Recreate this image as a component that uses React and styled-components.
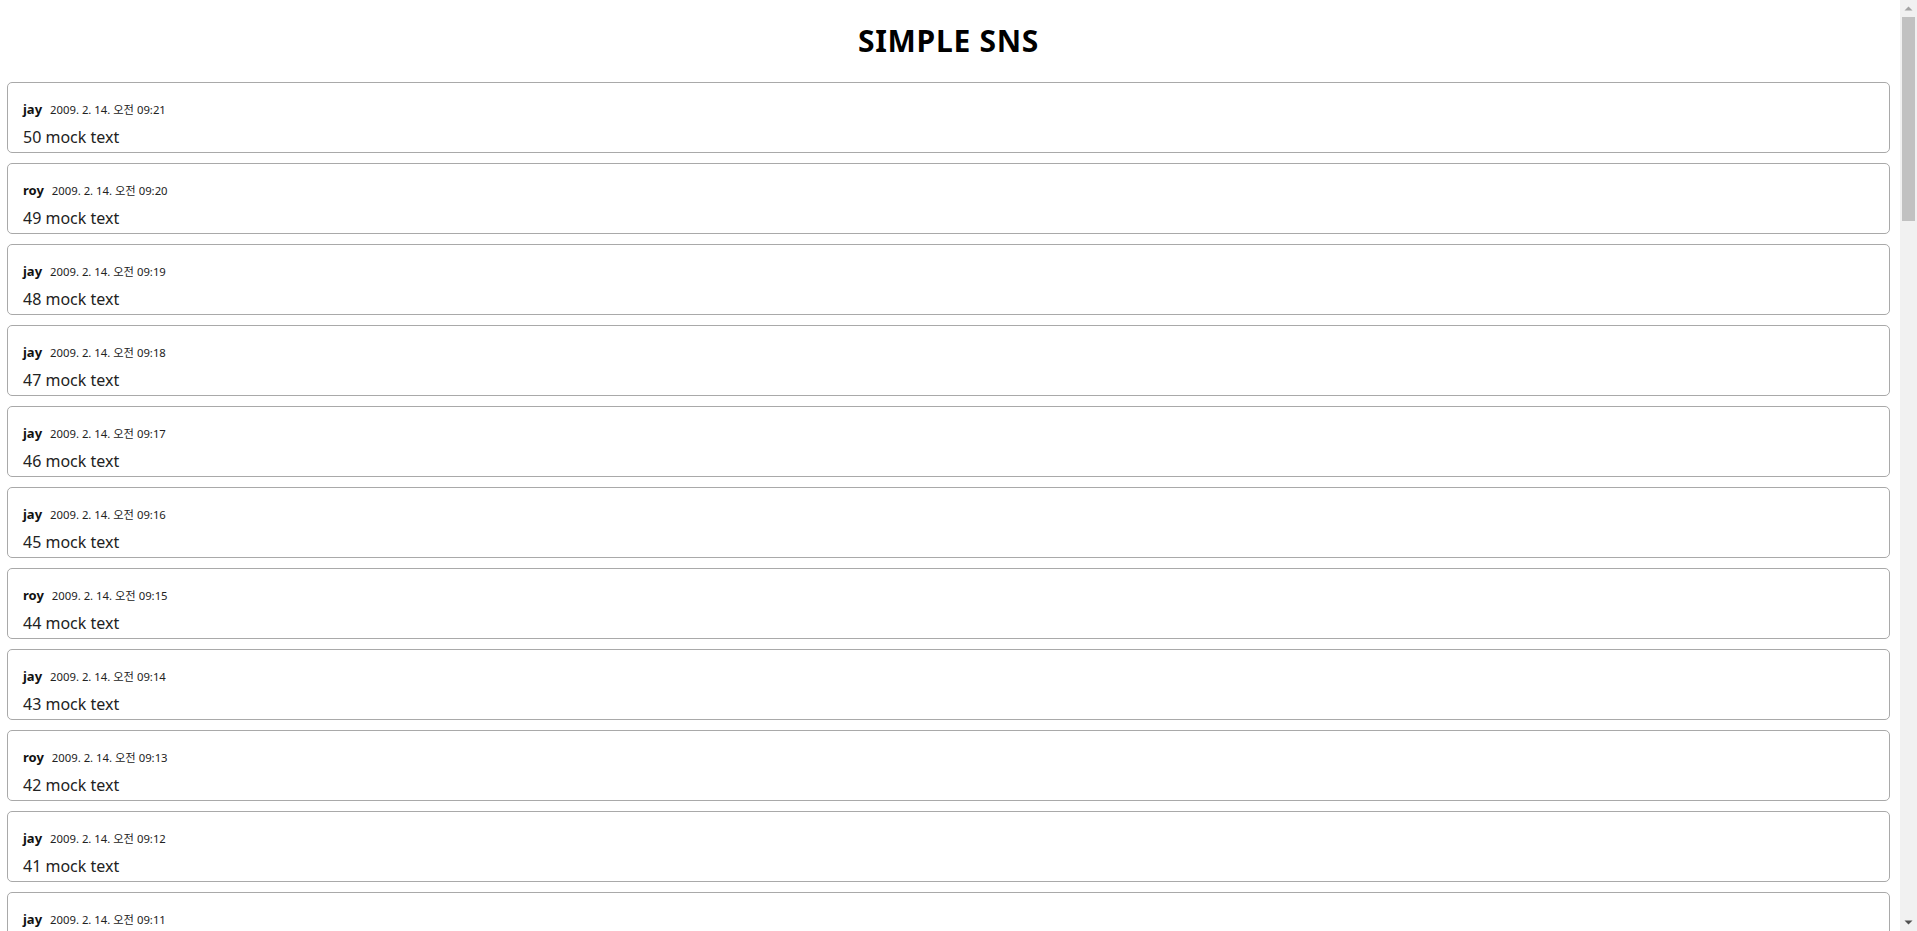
import React from 'react';
import styled, { createGlobalStyle } from 'styled-components';

const GlobalStyle = createGlobalStyle`
  html, body {
    margin: 0;
    padding: 0;
    background: #ffffff;
  }
  body {
    font-family: 'Noto Sans', 'Noto Sans CJK KR', sans-serif;
    color: #111;
  }
`;

const Shell = styled.div`
  display: flex;
  height: 100vh;
  overflow: hidden;
`;

const Page = styled.div`
  flex: 1;
  min-width: 0;
  display: flex;
  flex-direction: column;
  padding: 21px 10px 20px 7px;
`;

const Title = styled.h1`
  margin: 0 0 21px;
  font-size: 30px;
  line-height: 40px;
  font-weight: 700;
  letter-spacing: 0.7px;
  text-align: center;
  color: #000;
`;

const List = styled.div`
  display: flex;
  flex-direction: column;
  gap: 10px;
`;

const Card = styled.div`
  display: flex;
  flex-direction: column;
  gap: 7px;
  flex-shrink: 0;
  height: 71px;
  box-sizing: border-box;
  padding: 16px 15px 3px;
  border: 1px solid #a9a9a9;
  border-radius: 5px;
`;

const Meta = styled.div`
  display: flex;
  align-items: baseline;
  gap: 8px;
  height: 20px;
  line-height: 20px;
`;

const Author = styled.span`
  font-size: 13px;
  font-weight: 700;
  color: #111;
`;

const Stamp = styled.span`
  font-size: 11.3px;
  color: #222;
`;

const Body = styled.div`
  font-size: 16px;
  line-height: 22px;
  color: #222;
`;

// window scrollbar
const Rail = styled.div`
  width: 17px;
  flex-shrink: 0;
  display: flex;
  flex-direction: column;
  background: #f1f1f1;
`;

const RailButton = styled.div`
  height: 17px;
  display: flex;
  align-items: center;
  justify-content: center;
  color: ${props => props.color};
`;

const Track = styled.div`
  flex: 1;
  display: flex;
  flex-direction: column;
`;

const Thumb = styled.div`
  height: 204px;
  margin: 0 2px;
  background: #c1c1c1;
`;

const Arrow = ({ down }) => (
  <svg width="9" height="5" viewBox="0 0 9 5">
    <path d={down ? 'M0.5 0.5 H8.5 L4.5 4.5 Z' : 'M0.5 4.5 H8.5 L4.5 0.5 Z'} fill="currentColor" />
  </svg>
);

const names = ['jay', 'roy', 'jay', 'jay', 'jay', 'jay', 'roy', 'jay', 'roy', 'jay', 'jay'];

const pad = n => String(n).padStart(2, '0');

const stampFor = n => {
  const total = 9 * 60 + n - 29;
  const h = Math.floor(total / 60);
  const m = total % 60;
  return `2009. 2. 14. 오전 ${pad(h)}:${pad(m)}`;
};

const posts = Array.from({ length: 50 }, (_, i) => {
  const n = 50 - i;
  return {
    id: n,
    author: names[i] || (n % 3 === 0 ? 'roy' : 'jay'),
    stamp: stampFor(n),
    text: `${n} mock text`,
  };
});

const Post = ({ author, stamp, text }) => (
  <Card>
    <Meta>
      <Author>{author}</Author>
      <Stamp>{stamp}</Stamp>
    </Meta>
    <Body>{text}</Body>
  </Card>
);

export default function App() {
  return (
    <>
      <GlobalStyle />
      <Shell>
        <Page>
          <Title>SIMPLE SNS</Title>
          <List>
            {posts.map(p => (
              <Post key={p.id} {...p} />
            ))}
          </List>
        </Page>
        <Rail>
          <RailButton color="#a3a3a3">
            <Arrow />
          </RailButton>
          <Track>
            <Thumb />
          </Track>
          <RailButton color="#505050">
            <Arrow down />
          </RailButton>
        </Rail>
      </Shell>
    </>
  );
}
